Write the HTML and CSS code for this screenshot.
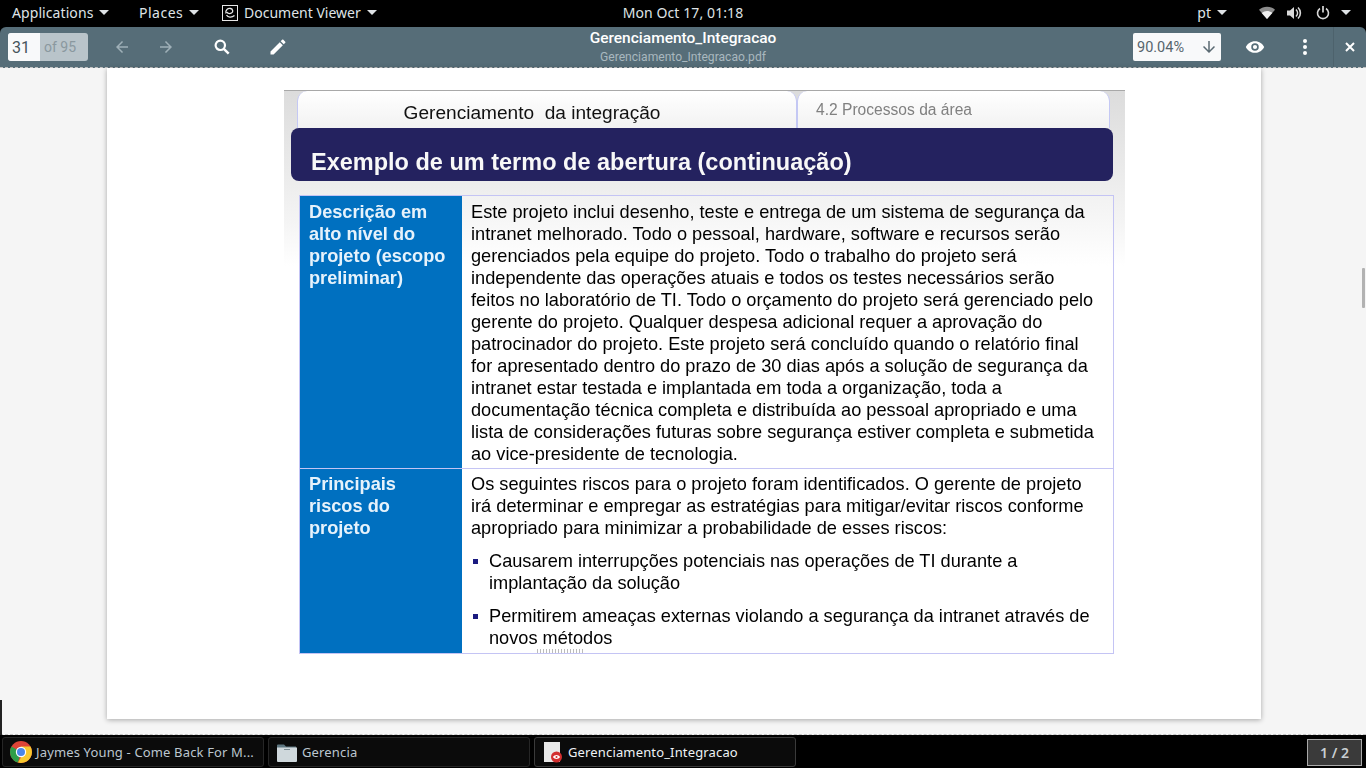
FILE: index.html
```html
<!DOCTYPE html>
<html lang="pt">
<head>
<meta charset="utf-8">
<title>Gerenciamento_Integracao</title>
<link rel="stylesheet" href="styles.css">
</head>
<body>
<header class="topbar">
  <div class="top-left">
    <span class="menu apps">Applications<i class="caret"></i></span>
    <span class="menu places">Places<i class="caret"></i></span>
    <span class="menu viewer">
      <svg class="doc-ico" width="16" height="16" viewBox="0 0 16 16"><rect x=".5" y=".5" width="15" height="15" fill="none" stroke="#e6e6e6"/><path d="M4 8.500C3 5 6 3 8.500 3.500 11 4 11.500 7 9.500 8 7.500 9 5.500 8.500 5 7M4.500 10c1.500 2.500 5 3 8 .5" fill="none" stroke="#e6e6e6" stroke-width="1.300"/></svg>
      Document Viewer<i class="caret"></i>
    </span>
  </div>
  <div class="clock">Mon Oct 17, 01:18</div>
  <div class="top-right">
    <span class="menu lang">pt<i class="caret"></i></span>
    <svg class="sys wifi" width="16" height="13" viewBox="0 0 16 13"><path d="M0 3.800C4.500-.4 11.500-.4 16 3.800L8 13z" fill="#8c8c8c"/><path d="M2.700 6.900C5.800 4.200 10.200 4.200 13.300 6.900L8 13z" fill="#f0f0f0"/></svg>
    <svg class="sys vol" width="16" height="16" viewBox="0 0 16 16"><path d="M1 5.500h3L8 2v12L4 10.500H1z" fill="#d8d8d8"/><path d="M10 4.500c2 2 2 5 0 7M12 2.500c3.200 3 3.200 8 0 11" fill="none" stroke="#d8d8d8" stroke-width="1.600"/></svg>
    <svg class="sys pow" width="14" height="15" viewBox="0 0 14 15"><path d="M4 3.500a5.500 5.500 0 1 0 6 0" fill="none" stroke="#d8d8d8" stroke-width="1.600"/><path d="M7 1v6.500" stroke="#d8d8d8" stroke-width="1.700"/></svg>
    <i class="caret sys-caret"></i>
  </div>
</header>

<section class="window">
  <div class="toolbar">
    <div class="pager"><span class="pg-cur">31</span><span class="pg-of">of 95</span></div>
    <svg class="tb prev" width="18" height="18" viewBox="0 0 24 24"><path d="M20 11H7.800l5.600-5.600L12 4l-8 8 8 8 1.400-1.400L7.800 13H20z" fill="#9fb0b8"/></svg>
    <svg class="tb next" width="18" height="18" viewBox="0 0 24 24"><path d="M4 11h12.200l-5.600-5.600L12 4l8 8-8 8-1.400-1.400 5.600-5.600H4z" fill="#9fb0b8"/></svg>
    <svg class="tb search" width="16" height="16" viewBox="0 0 16 16"><circle cx="6.300" cy="6.300" r="4.700" fill="none" stroke="#fff" stroke-width="2.200"/><path d="M9.800 9.800L14.700 14.700" stroke="#fff" stroke-width="2.400"/></svg>
    <svg class="tb pen" width="20" height="20" viewBox="0 0 24 24"><path d="M3 17.300V21h3.700L17.800 9.900l-3.700-3.700zM20.700 7c.4-.4.400-1 0-1.400l-2.300-2.300c-.4-.4-1-.4-1.400 0l-1.800 1.800 3.700 3.700z" fill="#fff"/></svg>
    <div class="doc-title">
      <div class="t1">Gerenciamento_Integracao</div>
      <div class="t2">Gerenciamento_Integracao.pdf</div>
    </div>
    <div class="zoom-box"><span>90.04%</span><svg width="18" height="18" viewBox="0 0 24 24"><path d="M13 4v12.200l5.600-5.600L20 12l-8 8-8-8 1.400-1.400 5.600 5.600V4z" fill="#5a6a72"/></svg></div>
    <svg class="tb eye" width="20" height="20" viewBox="0 0 24 24"><path d="M12 5C7 5 2.700 8.100 1 12c1.700 3.900 6 7 11 7s9.300-3.100 11-7c-1.700-3.900-6-7-11-7zm0 11.500a4.500 4.500 0 1 1 0-9 4.500 4.500 0 0 1 0 9zm0-7a2.500 2.500 0 1 0 0 5 2.500 2.500 0 0 0 0-5z" fill="#fff"/></svg>
    <svg class="tb dots" width="4" height="16" viewBox="0 0 4 16"><circle cx="2" cy="2" r="2" fill="#fff"/><circle cx="2" cy="8" r="2" fill="#fff"/><circle cx="2" cy="14" r="2" fill="#fff"/></svg>
    <div class="close"><svg width="10" height="10" viewBox="0 0 10 10"><path d="M1 1l8 8M9 1l-8 8" stroke="#fff" stroke-width="2"/></svg></div>
  </div>

  <main class="content">
    <article class="page">
      <div class="slide">
        <div class="tabs">
          <div class="tab tab-main">Gerenciamento&nbsp; da integração</div>
          <div class="tab tab-sub">4.2 Processos da área</div>
        </div>
        <h1 class="banner">Exemplo de um termo de abertura (continuação)</h1>
        <div class="table">
          <div class="label">Descrição em<br>alto nível do<br>projeto (escopo<br>preliminar)</div>
          <div class="cell first">
            <p class="line">Este projeto inclui desenho, teste e entrega de um sistema de segurança da</p>
            <p class="line">intranet melhorado. Todo o pessoal, hardware, software e recursos serão</p>
            <p class="line">gerenciados pela equipe do projeto. Todo o trabalho do projeto será</p>
            <p class="line">independente das operações atuais e todos os testes necessários serão</p>
            <p class="line">feitos no laboratório de TI. Todo o orçamento do projeto será gerenciado pelo</p>
            <p class="line">gerente do projeto. Qualquer despesa adicional requer a aprovação do</p>
            <p class="line">patrocinador do projeto. Este projeto será concluído quando o relatório final</p>
            <p class="line">for apresentado dentro do prazo de 30 dias após a solução de segurança da</p>
            <p class="line">intranet estar testada e implantada em toda a organização, toda a</p>
            <p class="line">documentação técnica completa e distribuída ao pessoal apropriado e uma</p>
            <p class="line">lista de considerações futuras sobre segurança estiver completa e submetida</p>
            <p class="line">ao vice-presidente de tecnologia.</p>
          </div>
          <div class="label label2">Principais<br>riscos do<br>projeto</div>
          <div class="cell second">
            <p class="line">Os seguintes riscos para o projeto foram identificados. O gerente de projeto</p>
            <p class="line">irá determinar e empregar as estratégias para mitigar/evitar riscos conforme</p>
            <p class="line">apropriado para minimizar a probabilidade de esses riscos:</p>
            <ul class="bullets">
              <li><p class="line">Causarem interrupções potenciais nas operações de TI durante a</p><p class="line">implantação da solução</p></li>
              <li><p class="line">Permitirem ameaças externas violando a segurança da intranet através de</p><p class="line">novos métodos</p></li>
            </ul>
          </div>
        </div>
      </div>
    </article>
    <div class="scroll-thumb"></div>
  </main>
</section>

<footer class="taskbar">
  <div class="task">
    <svg class="task-ico chrome" width="22" height="22" viewBox="0 0 22 22"><circle cx="11" cy="11" r="11" fill="#de4437"/><path d="M11 11L1.500 5.500A11 11 0 0 0 8 21.600z" fill="#2f9e48"/><path d="M11 5.500h9.500A11 11 0 0 1 11 22l-3-.4L14 11z" fill="#f7c82d"/><circle cx="11" cy="11" r="5.200" fill="#fff"/><circle cx="11" cy="11" r="4" fill="#4a86e8"/></svg>
    <span>Jaymes Young - Come Back For M...</span>
  </div>
  <div class="task">
    <svg class="task-ico folder" width="20" height="20" viewBox="0 0 20 20"><path d="M0 3.500a1 1 0 0 1 1-1h6l2 2h10v3H0z" fill="#5e7680"/><path d="M0 5.500h20V19a1 1 0 0 1-1 1H1a1 1 0 0 1-1-1z" fill="#cfd8dc"/><rect x="7" y="7" width="6" height="1" fill="#7b8b92"/></svg>
    <span>Gerencia</span>
  </div>
  <div class="task active">
    <svg class="task-ico doc" width="20" height="22" viewBox="0 0 20 22"><rect x="0" y="1" width="16" height="20" fill="#e8e8e8"/><circle cx="12.500" cy="16" r="5.500" fill="#d32f2f"/><path d="M8.800 16c1-1.300 2.300-2 3.700-2s2.700.7 3.700 2c-1 1.300-2.300 2-3.700 2s-2.700-.7-3.700-2z" fill="#fff"/><circle cx="12.500" cy="16" r="1" fill="#d32f2f"/></svg>
    <span>Gerenciamento_Integracao</span>
  </div>
  <div class="workspace">1 / 2</div>
</footer>
<div class="corner"></div>
</body>
</html>
```

FILE: styles.css
```css
* { box-sizing: border-box; }
html, body { margin: 0; padding: 0; }
body {
  width: 1366px; height: 768px; overflow: hidden;
  display: flex; flex-direction: column;
  background: #000; position: relative;
  font-family: "Noto Sans", sans-serif;
}

/* top panel */
.topbar {
  height: 27px; flex: none; background: #000; color: #dfe3e6;
  display: grid; grid-template-columns: 1fr auto 1fr; align-items: center;
  font-size: 14px; padding-bottom: 2px;
}
.top-left { display: flex; align-items: center; padding-left: 12px; }
.menu { display: inline-flex; align-items: center; white-space: nowrap; }
.apps { width: 127px; letter-spacing: .08px; }
.places { width: 83px; letter-spacing: .5px; }
.doc-ico { margin-right: 6px; }
.caret {
  display: inline-block; width: 0; height: 0; margin-left: 6px;
  border-left: 5px solid transparent; border-right: 5px solid transparent;
  border-top: 5px solid #dfe3e6;
}
.clock { letter-spacing: .1px; }
.top-right { display: flex; align-items: center; justify-content: flex-end; padding-right: 15px; }
.lang { margin-right: 32px; }
.wifi { margin-right: 11px; }
.vol { margin-right: 14px; }
.sys-caret { margin-left: 11px; }

/* viewer window */
.window { flex: 1; display: flex; flex-direction: column; min-height: 0; }
.toolbar {
  height: 41px; flex: none; background: #566d78;
  border-radius: 6px 6px 0 0; border-bottom: 1px dashed #c4c4c4;
  display: flex; align-items: center; position: relative;
  font-family: Roboto, sans-serif;
}
.pager {
  margin-left: 8px; width: 80px; height: 28px; border-radius: 3px; overflow: hidden;
  display: flex; background: #b9c4ca;
}
.pg-cur { width: 32px; background: #f8f9fa; color: #46545b; padding: 5px 0 0 4px; font-size: 16px; }
.pg-of { color: #8a989f; padding: 6px 0 0 4px; font-size: 14px; }
.tb { flex: none; }
.prev { margin-left: 25px; }
.next { margin-left: 26px; }
.search { margin-left: 39px; }
.pen { margin-left: 38px; }
.doc-title {
  position: absolute; left: 483px; width: 400px; top: 2px; text-align: center; color: #fff;
}
.t1 { font-size: 15.500px; font-weight: 500; line-height: 19px; }
.t2 { font-size: 12.100px; line-height: 17px; color: #a9b8bf; padding-top: 1px; }
.zoom-box {
  margin-left: auto; width: 88px; height: 28px; background: #f8f9fa; border-radius: 2px;
  display: flex; align-items: center; justify-content: space-between;
  padding: 0 3px 0 4px; font-size: 14.500px; color: #56656d;
}
.eye { margin-left: 24px; }
.dots { margin-left: 38px; }
.close {
  margin-left: 26px; width: 33px; height: 40px; border-left: 1px solid #4d626c;
  display: flex; align-items: center; justify-content: center;
}
.content {
  flex: 1; min-height: 0; background: #f5f5f5; position: relative;
  padding-left: 107px; border-bottom: 1px dashed #c4c4c4;
  margin-bottom: 1px;
}
.scroll-thumb {
  position: absolute; left: 1362px; top: 200px; width: 3px; height: 40px;
  background: #b2b2b2; border-radius: 1px;
}

/* pdf page */
.page {
  width: 1154px; height: 651px; background: #fff;
  box-shadow: 0 1px 5px rgba(0,0,0,.32);
  padding: 22px 136px 0 177px;
  font-family: "Liberation Sans", Arial, sans-serif;
}
.slide {
  width: 841px; height: 590px; padding: 0 0 0 7px;
  border-top: 1px solid #a8a8a8;
  background: linear-gradient(#dcdcdc, #f4f4f4 130px, #fff 175px);
  filter: blur(.6px);
}
.tabs { display: flex; height: 37px; padding-left: 6px; }
.tab {
  border: 1px solid #c4c8f4; border-bottom: 0; border-top: 0;
  border-radius: 10px 10px 0 0;
  background: linear-gradient(#fff, #f2f2f2);
}
.tab-main {
  width: 500px; font-size: 19.100px; color: #111; text-align: center; line-height: 44px; padding-right: 30px;
}
.tab-sub {
  width: 313px; font-size: 15.600px; color: #808080; line-height: 38px; padding-left: 18px;
}
.banner {
  margin: 0; width: 822px; height: 53px; background: #24225f; border-radius: 8px;
  color: #f8f8f8; font-size: 23.500px; font-weight: 700; line-height: 69px; padding-left: 20px;
  white-space: nowrap;
}
.table {
  margin: 14px 0 0 8px; width: 815px; height: 459px;
  display: grid; grid-template-columns: 162px 1fr; grid-template-rows: 272px 185px;
  border: 1px solid #c4c4f4;
}
.label {
  background: #0070c0; color: #e6f2fb; font-size: 18.200px; font-weight: 700; line-height: 22px;
  padding: 5px 0 0 9px; white-space: nowrap;
}
.cell {
  padding: 5px 0 0 9px; color: #000; font-size: 18.200px; line-height: 22px;
}
.first { background: linear-gradient(#f2f2f2, #fff 70px); }
.second { border-top: 1px solid #c4c4f4; padding-top: 4px; background: #fff; position: relative; }
.second::after {
  content: ""; position: absolute; bottom: 0; left: 75px; width: 46px; height: 4px; opacity: .5;
  background: repeating-linear-gradient(90deg, #777 0 1px, transparent 1px 3px);
}
.label2 { border-top: 1px solid #c4c4f4; padding-top: 4px; }
.line { margin: 0; white-space: nowrap; }
.bullets { margin: 0; padding: 0; list-style: none; }
.bullets li { position: relative; padding-left: 18px; margin-top: 11px; }
.bullets li::before {
  content: ""; position: absolute; left: 2px; top: 9px; width: 5px; height: 5px; background: #1a1a80;
}

/* task bar */
.taskbar {
  height: 32px; flex: none; background: #000; display: flex; align-items: center;
  padding: 0 4px 0 2px; gap: 4px; color: #bcc6cf; font-size: 13px; letter-spacing: .15px;
}
.task {
  width: 262px; height: 30px; background: #0b0b0b; border: 1px solid #262626; border-radius: 3px;
  display: flex; align-items: center; padding-left: 7px; white-space: nowrap; overflow: hidden;
}
.task-ico { flex: none; }
.chrome { margin-right: 4px; }
.folder { margin-left: 1px; margin-right: 5px; }
.task.active { border-color: #3a3a3a; color: #eef2f5; }
.doc { margin-left: 2px; margin-right: 4px; }
.workspace {
  margin-left: auto; width: 55px; height: 27px; background: #3a3a3a; border: 1px solid #a9a9a9;
  display: flex; align-items: center; justify-content: center; color: #c8ced2; font-weight: 600;
  font-size: 14px; letter-spacing: 0;
}
.corner { position: absolute; left: 0; top: 700px; width: 2px; height: 35px; background: #222; }
```
